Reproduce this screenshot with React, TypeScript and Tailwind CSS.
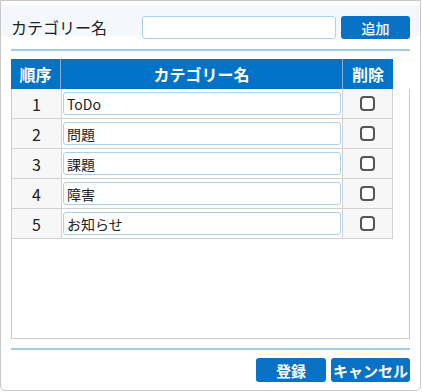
import React from "react";

const rows = [
  { n: 1, v: "ToDo" },
  { n: 2, v: "問題" },
  { n: 3, v: "課題" },
  { n: 4, v: "障害" },
  { n: 5, v: "お知らせ" },
];

export default function App() {
  return (
    <div
      className="w-[422px] h-[392px] bg-white text-[#222]"
      style={{ fontFamily: '"Noto Sans CJK JP", "Noto Sans", sans-serif' }}
    >
      <div className="w-[421px] h-[391px] border border-[#c8c8c8] rounded-b-[5px] px-[10px] pt-[4px] flex flex-col">
        <div className="-mx-[10px] px-[10px] h-[31px] bg-[#f4f8fc] pt-[11px]">
          <div className="flex items-center h-[23px]">
            <div className="w-[131px] text-[16px] leading-none -mt-[2px]">カテゴリー名</div>
            <input
              className="w-[194px] h-[23px] border border-[#a8d2ee] rounded-[3px] bg-white outline-none"
              defaultValue=""
            />
            <button className="ml-[5px] w-[69px] h-[23px] bg-[#0a72c4] rounded-[3px] text-white text-[14px] leading-none font-medium">
              追加
            </button>
          </div>
        </div>
        <div className="mt-[13px] h-[2px] bg-[#a0cce9]" />
        <div className="mt-[8px] flex h-[30px] w-[382px] bg-[#0073c6] text-white text-[16px] font-bold">
          <div className="w-[50px] flex items-center justify-center border-r border-[#8fb0d0]">順序</div>
          <div className="w-[282px] flex items-center justify-center border-r border-[#8fb0d0]">カテゴリー名</div>
          <div className="w-[50px] flex items-center justify-center">削除</div>
        </div>
        <div className="h-[250px] w-[399px] border border-t-0 border-[#cccccc]">
          {rows.map((r) => (
            <div key={r.n} className="flex h-[30px] w-[382px] border-b border-r border-[#d2d2d2] -ml-px">
              <div className="w-[51px] bg-[#f7f7f7] border-l border-[#cccccc] border-r border-r-[#d2d2d2] flex items-center justify-center text-[16px]">
                {r.n}
              </div>
              <div className="w-[281px] border-r border-[#d2d2d2] flex items-center pl-[1px] pr-[1px]">
                <input
                  className="w-full h-[23px] border border-[#a8d2ee] rounded-[3px] px-[3px] text-[14px] bg-white outline-none"
                  defaultValue={r.v}
                />
              </div>
              <div className="flex-1 bg-[#f7f7f7] flex items-center justify-center">
                <div className="w-[15px] h-[15px] border-2 border-[#555] rounded-[4px] bg-white" />
              </div>
            </div>
          ))}
        </div>
        <div className="mt-[9px] h-[2px] bg-[#a0cce9]" />
        <div className="mt-[8px] flex justify-end gap-[5px]">
          <button className="w-[70px] h-[24px] bg-[#0a72c4] rounded-[3px] text-white text-[15px] font-bold leading-none">
            登録
          </button>
          <button className="w-[79px] h-[24px] bg-[#0a72c4] rounded-[3px] text-white text-[15px] font-bold leading-none">
            キャンセル
          </button>
        </div>
      </div>
    </div>
  );
}
